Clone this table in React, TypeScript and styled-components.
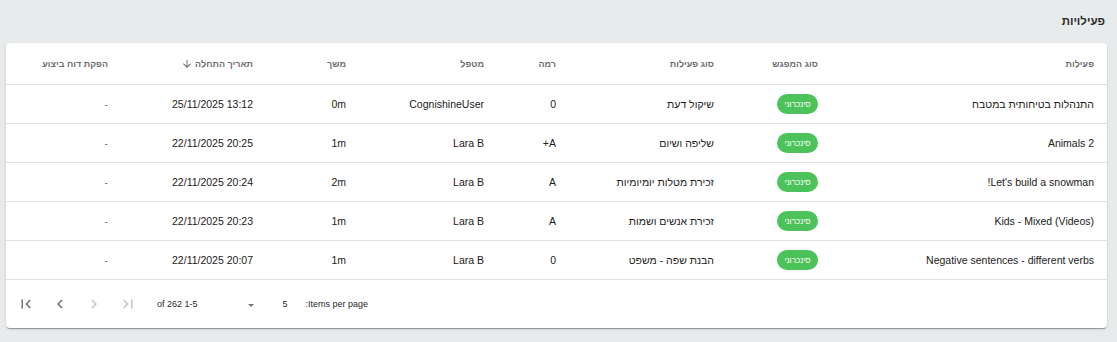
import React from "react";
import styled, { createGlobalStyle } from "styled-components";

const GlobalStyle = createGlobalStyle`
    html, body {
        margin: 0;
        padding: 0;
        background: #e8ebeb;
        font-family: "Liberation Sans", Arial, sans-serif;
    }
`;

const Page = styled.div`
    direction: rtl;
    padding: 14px 10px 15px 6px;
    box-sizing: border-box;
`;

const Title = styled.h2`
    margin: 0 2px 15px 0;
    font-size: 11.5px;
    line-height: 14px;
    font-weight: 700;
    color: #2b2b2b;
`;

const Card = styled.div`
    background: #ffffff;
    border-radius: 4px;
    box-shadow: 0 2px 1px -1px rgba(0, 0, 0, 0.2), 0 1px 1px 0 rgba(0, 0, 0, 0.14),
        0 1px 3px 0 rgba(0, 0, 0, 0.12);
    overflow: hidden;
`;

const Table = styled.table`
    width: 100%;
    border-collapse: collapse;
    table-layout: fixed;
`;

const HeadCell = styled.th`
    height: 41px;
    padding: 0;
    text-align: right;
    font-size: 9px;
    font-weight: 700;
    color: #6e6e6e;
    border-bottom: 1px solid #e0e0e0;
    &:first-child {
        padding-right: 13px;
    }
    &:last-child {
        padding-left: 12px;
    }
`;

const SortLabel = styled.span`
    display: inline-flex;
    align-items: center;
    gap: 2px;
`;

const Cell = styled.td<{ $ltr?: boolean; $muted?: boolean }>`
    height: 38px;
    padding: 0;
    text-align: right;
    direction: ${(p) => (p.$ltr ? "ltr" : "rtl")};
    font-size: 10.5px;
    color: ${(p) => (p.$muted ? "#757575" : "#212121")};
    border-bottom: 1px solid #e0e0e0;
    white-space: nowrap;
    &:first-child {
        padding-right: 13px;
    }
    &:last-child {
        padding-left: 12px;
    }
`;

const Chip = styled.span`
    display: inline-flex;
    align-items: center;
    justify-content: center;
    width: 41px;
    height: 20px;
    border-radius: 10px;
    background: #4cc35a;
    color: #ffffff;
    font-size: 8px;
`;

const Paginator = styled.div`
    display: flex;
    align-items: center;
    justify-content: flex-end;
    height: 48px;
    padding-left: 3px;
    font-size: 9px;
    color: #2a2a2a;
`;

const PageSizeLabel = styled.span`
    margin-left: 16px;
`;

const PageSizeSelect = styled.div`
    display: flex;
    align-items: center;
    justify-content: space-between;
    width: 42px;
    padding-right: 2px;
    box-sizing: border-box;
`;

const SelectArrow = styled.span`
    width: 0;
    height: 0;
    border-left: 3.5px solid transparent;
    border-right: 3.5px solid transparent;
    border-top: 3.5px solid #757575;
    margin-top: 2px;
`;

const RangeLabel = styled.span`
    margin: 0 50px 0 12px;
`;

const Actions = styled.div`
    display: flex;
`;

const PageButton = styled.button<{ $disabled?: boolean }>`
    width: 34px;
    height: 34px;
    padding: 0;
    border: none;
    background: transparent;
    display: flex;
    align-items: center;
    justify-content: center;
    color: ${(p) => (p.$disabled ? "#c4c4c4" : "#6f6f6f")};
    cursor: ${(p) => (p.$disabled ? "default" : "pointer")};
`;

const Icon = ({ d, size = 18 }: { d: string; size?: number }) => (
    <svg width={size} height={size} viewBox="0 0 24 24" fill="currentColor">
        <path d={d} />
    </svg>
);

const icons = {
    lastPage: "M5.59 7.41L10.18 12l-4.59 4.59L7 18l6-6-6-6zM16 6h2v12h-2z",
    chevronRight: "M10 6L8.59 7.41 13.17 12l-4.58 4.59L10 18l6-6z",
    chevronLeft: "M15.41 7.41L14 6l-6 6 6 6 1.41-1.41L10.83 12z",
    firstPage: "M18.41 16.59L13.82 12l4.59-4.59L17 6l-6 6 6 6zM6 6h2v12H6z",
    arrowDown: "M20 12l-1.41-1.41L13 16.17V4h-2v12.17l-5.58-5.59L4 12l8 8 8-8z",
};

const columns = [289, 104, 158, 72, 138, 93, 145, 102];

interface Activity {
    name: string;
    type: string;
    level: string;
    therapist: string;
    duration: string;
    start: string;
}

const rows: Activity[] = [
    { name: "התנהלות בטיחותית במטבח", type: "שיקול דעת", level: "0", therapist: "CognishineUser", duration: "0m", start: "25/11/2025 13:12" },
    { name: "Animals 2", type: "שליפה ושיום", level: "A+", therapist: "Lara B", duration: "1m", start: "22/11/2025 20:25" },
    { name: "Let's build a snowman!", type: "זכירת מטלות יומיומיות", level: "A", therapist: "Lara B", duration: "2m", start: "22/11/2025 20:24" },
    { name: "Kids - Mixed (Videos)", type: "זכירת אנשים ושמות", level: "A", therapist: "Lara B", duration: "1m", start: "22/11/2025 20:23" },
    { name: "Negative sentences - different verbs", type: "הבנת שפה - משפט", level: "0", therapist: "Lara B", duration: "1m", start: "22/11/2025 20:07" },
];

const App = () => {
    return (
        <>
            <GlobalStyle />
            <Page>
                <Title>פעילויות</Title>
                <Card>
                    <Table>
                        <colgroup>
                            {columns.map((w, i) => (
                                <col key={i} style={{ width: w }} />
                            ))}
                        </colgroup>
                        <thead>
                            <tr>
                                <HeadCell>פעילות</HeadCell>
                                <HeadCell>סוג המפגש</HeadCell>
                                <HeadCell>סוג פעילות</HeadCell>
                                <HeadCell>רמה</HeadCell>
                                <HeadCell>מטפל</HeadCell>
                                <HeadCell>משך</HeadCell>
                                <HeadCell>
                                    <SortLabel>
                                        תאריך התחלה
                                        <Icon d={icons.arrowDown} size={12} />
                                    </SortLabel>
                                </HeadCell>
                                <HeadCell>הפקת דוח ביצוע</HeadCell>
                            </tr>
                        </thead>
                        <tbody>
                            {rows.map((r) => (
                                <tr key={r.name}>
                                    <Cell>{r.name}</Cell>
                                    <Cell>
                                        <Chip>סינכרוני</Chip>
                                    </Cell>
                                    <Cell>{r.type}</Cell>
                                    <Cell>{r.level}</Cell>
                                    <Cell>{r.therapist}</Cell>
                                    <Cell>{r.duration}</Cell>
                                    <Cell $ltr>{r.start}</Cell>
                                    <Cell $muted>-</Cell>
                                </tr>
                            ))}
                        </tbody>
                    </Table>
                    <Paginator>
                        <PageSizeLabel>Items per page:</PageSizeLabel>
                        <PageSizeSelect>
                            <span>5</span>
                            <SelectArrow />
                        </PageSizeSelect>
                        <RangeLabel>1-5 of 262</RangeLabel>
                        <Actions>
                            <PageButton $disabled>
                                <Icon d={icons.lastPage} />
                            </PageButton>
                            <PageButton $disabled>
                                <Icon d={icons.chevronRight} />
                            </PageButton>
                            <PageButton>
                                <Icon d={icons.chevronLeft} />
                            </PageButton>
                            <PageButton>
                                <Icon d={icons.firstPage} />
                            </PageButton>
                        </Actions>
                    </Paginator>
                </Card>
            </Page>
        </>
    );
};

export default App;
